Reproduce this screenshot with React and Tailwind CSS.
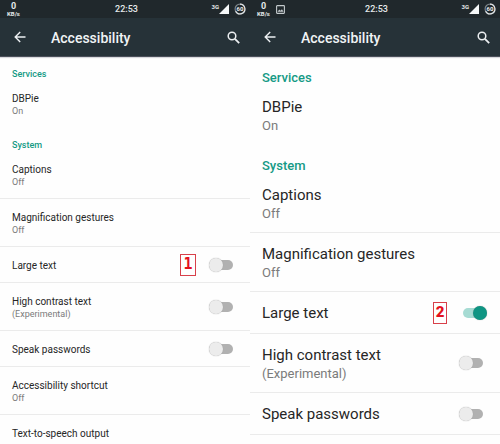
import { useState } from 'react';
import clsx from 'clsx';

const BackIcon = () => (
  <svg width="12" height="12" viewBox="0 0 12 12" fill="none" stroke="#eceff1" strokeWidth="1.4">
    <path d="M11.5 6H1.2M6.2 1L1.2 6l5 5" />
  </svg>
);

const SearchIcon = () => (
  <svg width="13" height="13" viewBox="0 0 13 13" fill="none" stroke="#eceff1">
    <circle cx="5" cy="5" r="3.8" strokeWidth="1.5" />
    <path d="M7.9 7.9l4.3 4.3" strokeWidth="1.8" />
  </svg>
);

const PictureIcon = () => (
  <svg width="9" height="9" viewBox="0 0 9 9" fill="none">
    <rect x="0.6" y="0.6" width="7.8" height="7.8" rx="0.6" stroke="#c3c9cc" strokeWidth="1.1" />
    <path d="M1.5 6.8l1.8-2.3 1.2 1.2 1.4-1.5 1.7 2.6z" fill="#c3c9cc" />
  </svg>
);

const SignalIcon = () => (
  <svg width="10" height="10" viewBox="0 0 10 10">
    <path d="M10 0v10H0z" fill="#f5f7f8" />
  </svg>
);

const BatteryIcon = () => (
  <svg width="12" height="12" viewBox="0 0 12 12">
    <circle cx="6" cy="6" r="4.9" fill="none" stroke="#7b8387" strokeWidth="1.2" />
    <path d="M6 1.1A4.9 4.9 0 1 1 1.6 8.2" fill="none" stroke="#dfe3e5" strokeWidth="1.2" />
    <text x="6" y="8.2" textAnchor="middle" fontSize="6" fontWeight="700" fill="#eceff1">60</text>
  </svg>
);

const StatusBar = ({ hasPicture }) => (
  <div className="h-[18px] grid grid-cols-3 items-center pl-[7px] pr-1 bg-[#20282c] text-[#e4e8ea]">
    <div className="flex items-center gap-1.5">
      <div className="flex flex-col items-center font-bold">
        <span className="text-[9px] leading-[10px]">0</span>
        <span className="text-[6px] leading-[6px]">KB/s</span>
      </div>
      {hasPicture && <PictureIcon />}
    </div>
    <span className="text-center text-[9px] leading-[18px] font-medium">22:53</span>
    <div className="flex items-center justify-end">
      <span className="self-start text-[6px] leading-[8px] font-bold">3G</span>
      <SignalIcon />
      <span className="ml-[5px]"><BatteryIcon /></span>
    </div>
  </div>
);

const Toolbar = () => (
  <header className="h-[39px] flex items-center pl-3.5 pr-[10px] bg-[#263238] border-b border-[#4a4f59] shadow-[0_1px_1px_#d8d8dc]">
    <button type="button" aria-label="Back"><BackIcon /></button>
    <h1 className="ml-[25px] pt-0.5 flex-1 text-[14px] leading-5 font-medium text-[#f1f4f5]">Accessibility</h1>
    <button type="button" aria-label="Search"><SearchIcon /></button>
  </header>
);

const SectionTitle = ({ large, children }) => (
  <h2
    className={clsx(
      'flex items-end px-3 font-medium text-[#159a85]',
      large ? 'h-[29px] text-[13px] leading-[17px]' : 'h-[23px] text-[9px] leading-[11px]'
    )}
  >
    {children}
  </h2>
);

const Badge = ({ large, children }) => (
  <span
    className={clsx(
      'h-[22px] flex items-center justify-center border border-[#d8404a] text-[15px] text-[#e3101c]',
      large
        ? 'w-[14px] mr-4 font-black'
        : "w-4 mr-[13px] font-bold font-['DejaVu_Sans_Mono',monospace]"
    )}
  >
    {children}
  </span>
);

const Switch = ({ id, checked, onChange }) => (
  <input
    id={id}
    type="checkbox"
    role="switch"
    checked={checked}
    onChange={onChange}
    className="relative shrink-0 appearance-none w-6 h-3.5 mr-[5px] checked:mr-px before:absolute before:inset-x-0 before:top-[2px] before:h-[10px] before:rounded-full before:bg-[#b1b1b1] checked:before:bg-[#a6dbd3] after:absolute after:left-0 after:top-0 after:size-3.5 after:rounded-full after:bg-[#ececec] after:shadow-[0_0_1px_#999] checked:after:left-[10px] checked:after:bg-[#0f9583]"
  />
);

const Row = ({ id, title, summary, toggle, badge, divider = true, large }) => {
  const [on, setOn] = useState(toggle === 'on');
  const height = large
    ? summary ? 'h-[59px]' : 'h-[42px]'
    : summary ? 'h-12' : 'h-9';
  const Text = toggle ? 'label' : 'div';

  return (
    <li className={clsx('flex items-center px-3 border-b', height, divider ? 'border-[#ebebeb]' : 'border-transparent')}>
      <Text htmlFor={toggle && id} className="flex-1 pt-0.5 whitespace-nowrap">
        <span className={clsx('block text-[#262626]', large ? 'text-[15px] leading-[19px]' : 'text-[10px] leading-[13px]')}>
          {title}
        </span>
        {summary && (
          <span className={clsx('block text-[#7b7b7b]', large ? 'text-[13px] leading-[17px]' : 'text-[9px] leading-[12px]')}>
            {summary}
          </span>
        )}
      </Text>
      {badge && <Badge large={large}>{badge}</Badge>}
      {toggle && <Switch id={id} checked={on} onChange={(e) => setOn(e.target.checked)} />}
    </li>
  );
};

const Screen = ({ name, large = false, step }) => (
  <section className="min-w-0 overflow-hidden">
    <StatusBar hasPicture={large} />
    <Toolbar />
    <SectionTitle large={large}>Services</SectionTitle>
    <ul>
      <Row title="DBPie" summary="On" divider={false} large={large} />
    </ul>
    <SectionTitle large={large}>System</SectionTitle>
    <ul>
      <Row title="Captions" summary="Off" large={large} />
      <Row title="Magnification gestures" summary="Off" large={large} />
      <Row id={`${name}-large`} title="Large text" toggle={large ? 'on' : 'off'} badge={step} large={large} />
      <Row id={`${name}-contrast`} title="High contrast text" summary="(Experimental)" toggle="off" large={large} />
      <Row id={`${name}-speak`} title="Speak passwords" toggle="off" large={large} />
      {!large && <Row title="Accessibility shortcut" summary="Off" />}
      {!large && <Row title="Text-to-speech output" divider={false} />}
    </ul>
  </section>
);

const App = () => (
  <main className="h-screen overflow-hidden grid grid-cols-2 bg-[#fefefe] font-[Roboto,sans-serif]">
    <Screen name="normal" step="1" />
    <Screen name="enlarged" step="2" large />
  </main>
);

export default App;
